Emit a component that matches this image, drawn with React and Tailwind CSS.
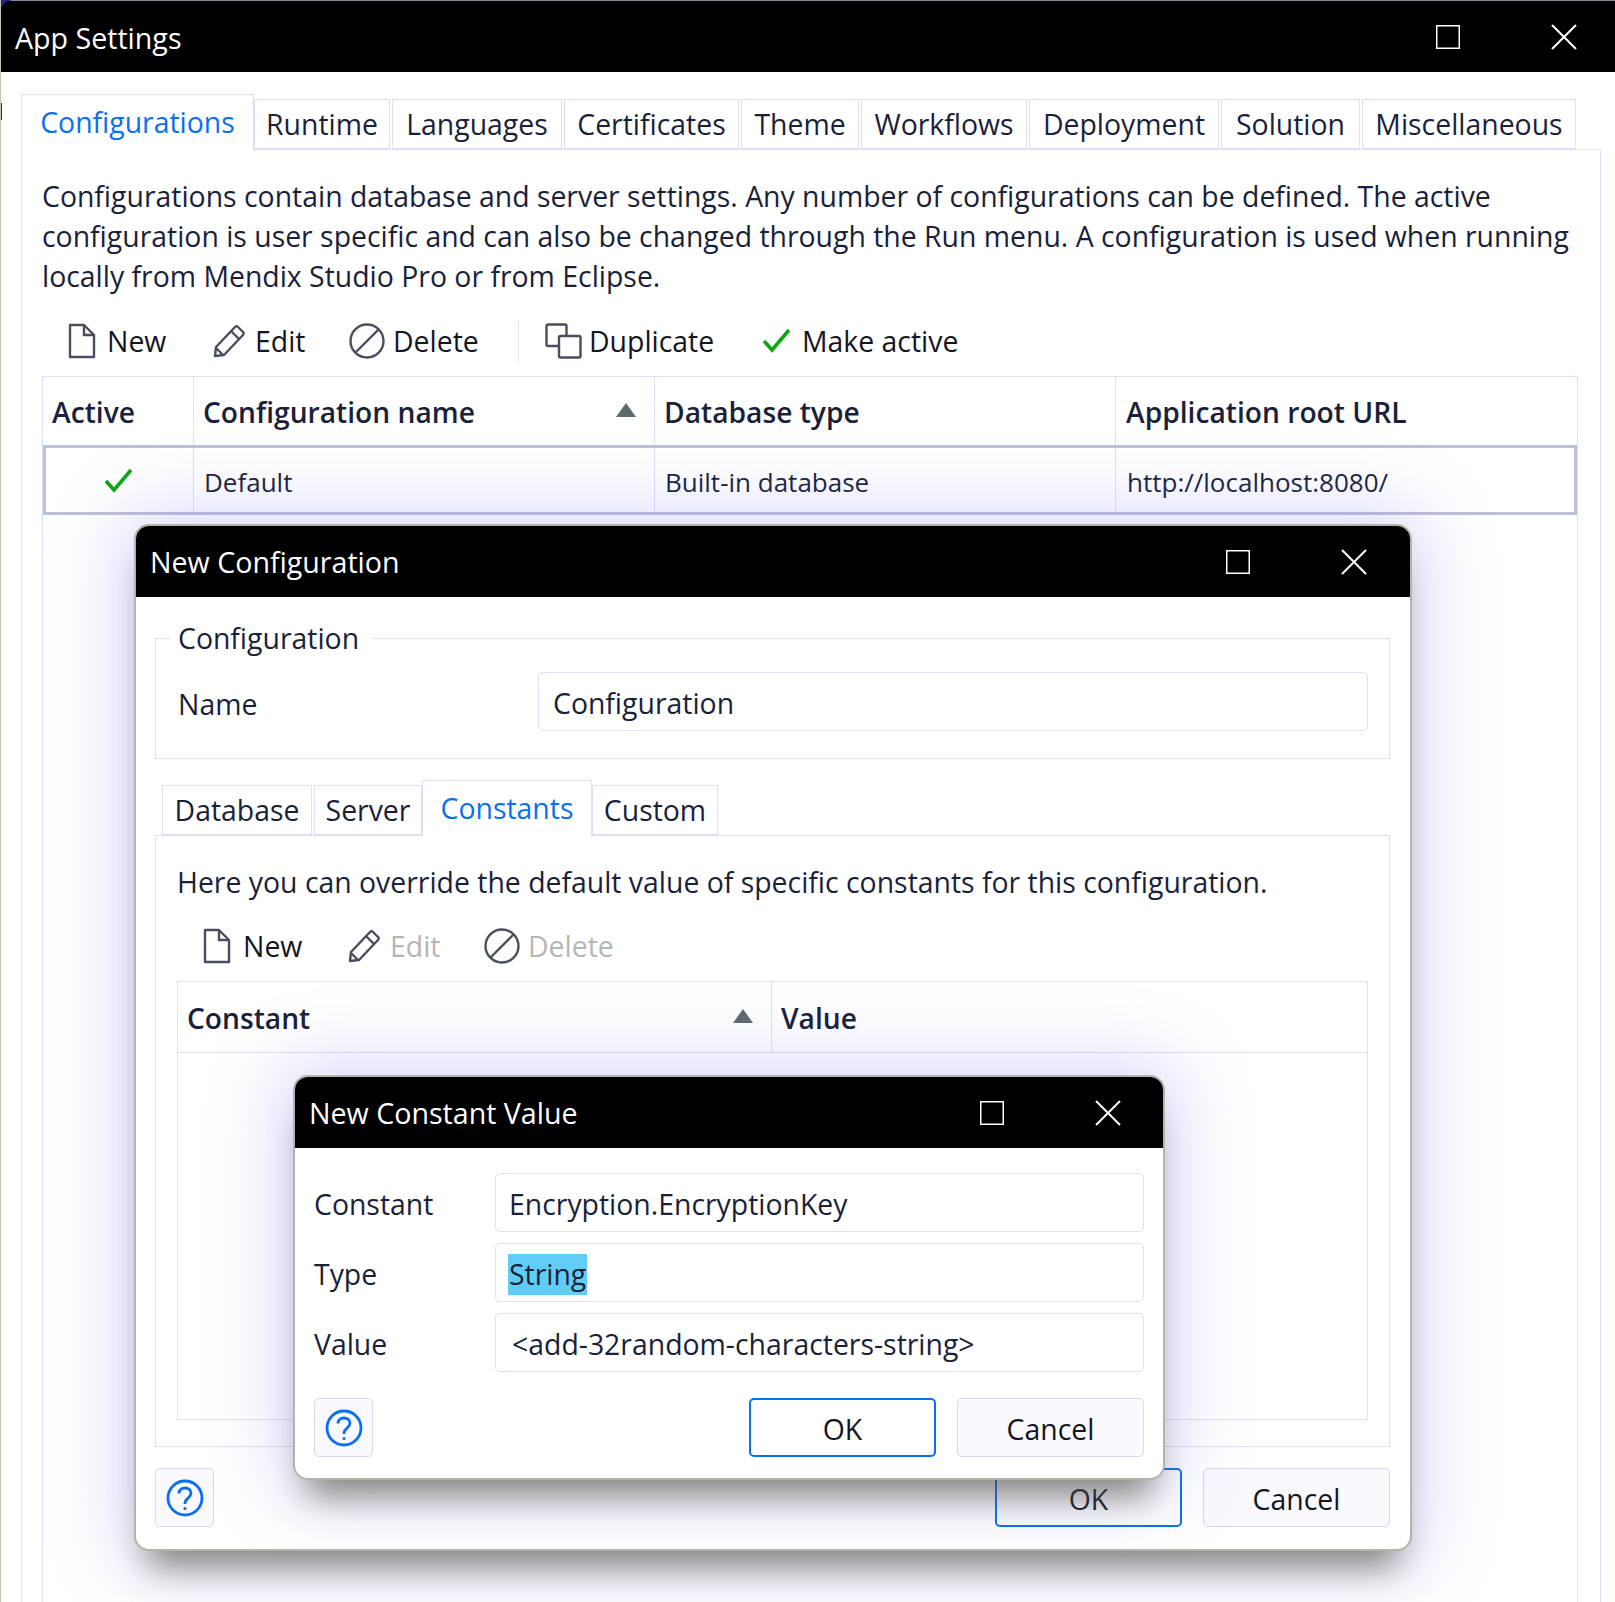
import React from 'react';

const line = 'border-[#dcdff6]';
const fontCls = "font-['Open_Sans','Noto_Sans',sans-serif]";
const dialogShadow = 'shadow-[0_30px_34px_-14px_rgba(70,70,50,0.6),0_0_70px_16px_rgba(120,120,235,0.26)]';

function DocIcon() {
    return (
        <svg width="30" height="36" viewBox="0 0 30 36" fill="none" stroke="#4a4e5e" strokeWidth="2.400">
            <path d="M3 2h14l10 10v22H3z" strokeLinejoin="round" />
            <path d="M17 2v10h10" />
        </svg>
    );
}

function PencilIcon() {
    return (
        <svg width="33" height="34" viewBox="0 0 33 34" fill="none" stroke="#4a4e5e" strokeWidth="2.400">
            <path d="M2 32l1-9L22 3a2 2 0 0 1 3 0l5 5a2 2 0 0 1 0 3L11 31z" strokeLinejoin="round" />
            <path d="M18 7l8 8M3 24l7 7" />
        </svg>
    );
}

function NoIcon() {
    return (
        <svg width="36" height="36" viewBox="0 0 36 36" fill="none" stroke="#4a4e5e" strokeWidth="2.400">
            <circle cx="18" cy="18" r="16.500" />
            <path d="M6.500 29.500L29.500 6.500" />
        </svg>
    );
}

function DupIcon() {
    return (
        <svg width="37" height="36" viewBox="0 0 37 36" fill="none" stroke="#4a4e5e" strokeWidth="2.400">
            <path d="M14 23H3a1.500 1.500 0 0 1-1.500-1.500V3A1.500 1.500 0 0 1 3 1.500h17A1.500 1.500 0 0 1 21.500 3v10" />
            <rect x="14" y="13" width="21.500" height="21.500" rx="1.500" />
        </svg>
    );
}

function CheckIcon() {
    return (
        <svg width="29" height="25" viewBox="0 0 29 25" fill="none" stroke="#0aa80f" strokeWidth="3.500">
            <path d="M2 13l8 9L27 2" />
        </svg>
    );
}

function SortIcon() {
    return (
        <svg width="20" height="14" viewBox="0 0 20 14" fill="#5b6b6e" className="mb-[5px]">
            <path d="M10 0l10 14H0z" />
        </svg>
    );
}

function HelpIcon() {
    return (
        <svg width="38" height="38" viewBox="0 0 38 38" fill="none" stroke="#0a6ff0" strokeWidth="2.800">
            <circle cx="19" cy="19" r="17" />
            <path d="M13 14.500c0-3.500 2.800-5.500 6-5.500s6 2 6 5.300c0 4.700-6 5-6 9.700v1" />
            <circle cx="19" cy="29.500" r="1.600" fill="#0a6ff0" stroke="none" />
        </svg>
    );
}

function TitleBar({ title, right, textPad }) {
    return (
        <div className="flex h-[71px] shrink-0 items-center bg-black pl-[14px] text-white">
            <span className={`flex-1 text-[28.600px] ${textPad}`}>{title}</span>
            <svg width="24" height="24" viewBox="0 0 24 24" fill="none" stroke="#fff" strokeWidth="1.500" className="mr-[91px]">
                <rect x="0.750" y="0.750" width="22.500" height="22.500" />
            </svg>
            <svg width="26" height="26" viewBox="0 0 26 26" fill="none" stroke="#fff" strokeWidth="2" className={right}>
                <path d="M1 1l24 24M25 1L1 25" />
            </svg>
        </div>
    );
}

function Tab({ label, width, active }) {
    if (active) {
        return (
            <div className={`relative z-10 -mb-[2px] flex h-[57px] items-center justify-center border-x border-t ${line} bg-white pb-[2px] text-[#0a6ff0] ${width}`}>
                {label}
            </div>
        );
    }
    return (
        <div className={`mr-[2px] flex h-[50px] items-center justify-center border-x border-t border-b ${line} bg-white ${width}`}>
            {label}
        </div>
    );
}

function ToolItem({ icon, label, width, gap, gray }) {
    return (
        <div className={`flex items-center ${width} ${gap}`}>
            {icon}
            <span className={gray ? 'text-[#b4b6b8]' : 'text-[#14161f]'}>{label}</span>
        </div>
    );
}

function Field({ children }) {
    return (
        <div className={`flex h-[59px] flex-1 items-center rounded-[5px] border ${line} px-[14px] pt-[3px]`}>{children}</div>
    );
}

function Button({ label, primary }) {
    return (
        <div className={`flex h-[59px] w-[187px] items-center justify-center rounded-[5px] pt-[4px] text-[#14161f] ${primary ? 'border-2 border-[#0a6ff0]' : 'border border-[#d6d8ee] bg-[#f9f9fe]'}`}>
            {label}
        </div>
    );
}

function HelpButton() {
    return (
        <div className="flex h-[59px] w-[59px] items-center justify-center rounded-[5px] border border-[#d6d8ee] bg-[#f9f9fe]">
            <HelpIcon />
        </div>
    );
}

function HeadCell({ label, width, sorted }) {
    return (
        <div className={`flex items-center justify-between border-r ${line} pl-[9px] pr-[18px] pt-[2px] font-semibold ${width}`}>
            {label}
            {sorted && <SortIcon />}
        </div>
    );
}

export default function App() {
    return (
        <div className={`relative flex h-[1602px] w-[1615px] flex-col overflow-hidden border-l border-[#c4c4b8] bg-white text-[28.400px] text-[#1a1f3a] ${fontCls}`}>
            <div className="relative bg-[#85858f] pt-[1px]">
                <div className="absolute left-0 top-0 h-[10px] w-[10px] bg-[#23277a]" />
                <div className="relative overflow-hidden rounded-tl-[9px]">
                    <TitleBar title="App Settings" right="mr-[38px]" textPad="pt-[4px]" />
                </div>
            </div>
            <div className="absolute -left-[1px] top-[103px] h-[17px] w-[2px] bg-[#23277a]" />

            <div className="ml-[20px] mt-[22px] flex items-end">
                <Tab label="Configurations" width="w-[233px]" active />
                <Tab label="Runtime" width="w-[136px]" />
                <Tab label="Languages" width="w-[170px]" />
                <Tab label="Certificates" width="w-[175px]" />
                <Tab label="Theme" width="w-[118px]" />
                <Tab label="Workflows" width="w-[166px]" />
                <Tab label="Deployment" width="w-[190px]" />
                <Tab label="Solution" width="w-[139px]" />
                <Tab label="Miscellaneous" width="w-[214px]" />
            </div>

            <div className={`ml-[20px] mr-[14px] flex flex-1 flex-col border-x border-t ${line} pl-[20px] pr-[22px] pt-[26px]`}>
                <p className="leading-[40px]">
                    <span className="block whitespace-nowrap">Configurations contain database and server settings. Any number of configurations can be defined. The active</span>
                    <span className="block whitespace-nowrap">configuration is user specific and can also be changed through the Run menu. A configuration is used when running</span>
                    <span className="block whitespace-nowrap">locally from Mendix Studio Pro or from Eclipse.</span>
                </p>

                <div className="ml-[25px] mt-[20px] flex h-[50px] items-center">
                    <ToolItem icon={<DocIcon />} label="New" width="w-[146px]" gap="gap-[10px]" />
                    <ToolItem icon={<PencilIcon />} label="Edit" width="w-[136px]" gap="gap-[9px]" />
                    <ToolItem icon={<NoIcon />} label="Delete" width="w-[169px]" gap="gap-[8px]" />
                    <div className={`mr-[26px] h-[40px] border-l ${line}`} />
                    <ToolItem icon={<DupIcon />} label="Duplicate" width="w-[217px]" gap="gap-[7px]" />
                    <ToolItem icon={<CheckIcon />} label="Make active" gap="gap-[11px]" />
                </div>

                <div className={`mt-[10px] flex flex-1 flex-col border-x border-t ${line}`}>
                    <div className="flex h-[68px] shrink-0 text-[28.200px]">
                        <HeadCell label="Active" width="w-[151px]" />
                        <HeadCell label="Configuration name" width="w-[461px]" sorted />
                        <HeadCell label="Database type" width="w-[461px]" />
                        <div className="flex items-center pl-[10px] pt-[2px] font-semibold">Application root URL</div>
                    </div>
                    <div className="flex h-[70px] shrink-0 border-[3px] border-[#bfc1d6] text-[26px]">
                        <div className={`flex w-[148px] items-center justify-center border-r ${line} pr-[2px]`}>
                            <CheckIcon />
                        </div>
                        <div className={`flex w-[461px] items-center border-r ${line} pl-[10px] pt-[5px]`}>Default</div>
                        <div className={`flex w-[461px] items-center border-r ${line} pl-[10px] pt-[5px]`}>Built-in database</div>
                        <div className="flex items-center pl-[11px] pt-[5px]">http://localhost:8080/</div>
                    </div>
                </div>
            </div>

            <div className={`absolute left-[133px] top-[524px] flex h-[1027px] w-[1278px] flex-col rounded-[15px] border-2 border-[#b4b4a8] bg-white ${dialogShadow}`}>
                <div className="overflow-hidden rounded-t-[13px]">
                    <TitleBar title="New Configuration" right="mr-[43px]" textPad="pt-[2px]" />
                </div>

                <div className={`relative ml-[19px] mr-[20px] mt-[41px] flex h-[121px] shrink-0 border ${line} pl-[22px] pr-[21px] pt-[33px]`}>
                    <span className="absolute -top-[21px] left-[14px] bg-white pl-[8px] pr-[14px] leading-[40px]">Configuration</span>
                    <div className="mt-[12px] flex h-[40px] w-[360px] items-center self-start">Name</div>
                    <Field>Configuration</Field>
                </div>

                <div className="ml-[26px] mt-[21px] flex items-end">
                    <Tab label="Database" width="w-[150px]" />
                    <Tab label="Server" width="w-[108px]" />
                    <Tab label="Constants" width="w-[170px] -ml-[2px]" active />
                    <Tab label="Custom" width="w-[126px]" />
                </div>

                <div className={`ml-[19px] mr-[20px] flex h-[612px] shrink-0 flex-col border ${line} pl-[21px] pr-[21px] pt-[26px]`}>
                    <p className="whitespace-nowrap leading-[40px]">Here you can override the default value of specific constants for this configuration.</p>
                    <div className="ml-[25px] mt-[19px] flex h-[50px] items-center">
                        <ToolItem icon={<DocIcon />} label="New" width="w-[146px]" gap="gap-[11px]" />
                        <ToolItem icon={<PencilIcon />} label="Edit" width="w-[136px]" gap="gap-[9px]" gray />
                        <ToolItem icon={<NoIcon />} label="Delete" gap="gap-[8px]" gray />
                    </div>
                    <div className={`mt-[10px] flex h-[439px] flex-col border ${line}`}>
                        <div className={`flex h-[71px] shrink-0 border-b ${line} text-[28.200px]`}>
                            <HeadCell label="Constant" width="w-[594px]" sorted />
                            <div className="flex items-center pl-[9px] pt-[2px] font-semibold">Value</div>
                        </div>
                    </div>
                </div>

                <div className="ml-[19px] mr-[20px] mt-[21px] flex gap-[21px]">
                    <HelpButton />
                    <div className="flex-1" />
                    <Button label="OK" primary />
                    <Button label="Cancel" />
                </div>
            </div>

            <div className={`absolute left-[292px] top-[1075px] flex h-[405px] w-[872px] flex-col rounded-[15px] border-2 border-[#b4b4a8] bg-white ${dialogShadow}`}>
                <div className="overflow-hidden rounded-t-[13px]">
                    <TitleBar title="New Constant Value" right="mr-[42px]" textPad="pt-[2px]" />
                </div>

                <div className="mx-[19px] mt-[25px] flex flex-col gap-[11px]">
                    <div className="flex items-center">
                        <span className="w-[181px] pt-[4px]">Constant</span>
                        <Field><span className="-ml-[1px]">Encryption.EncryptionKey</span></Field>
                    </div>
                    <div className="flex items-center">
                        <span className="w-[181px] pt-[4px]">Type</span>
                        <Field><span className="-ml-[2px] bg-[#5fcdf5] px-[1px] leading-[41px]">String</span></Field>
                    </div>
                    <div className="flex items-center">
                        <span className="w-[181px] pt-[4px]">Value</span>
                        <Field><span className="pl-[2px]">&lt;add-32random-characters-string&gt;</span></Field>
                    </div>
                </div>

                <div className="mx-[19px] mt-[26px] flex gap-[21px]">
                    <HelpButton />
                    <div className="flex-1" />
                    <Button label="OK" primary />
                    <Button label="Cancel" />
                </div>
            </div>
        </div>
    );
}
